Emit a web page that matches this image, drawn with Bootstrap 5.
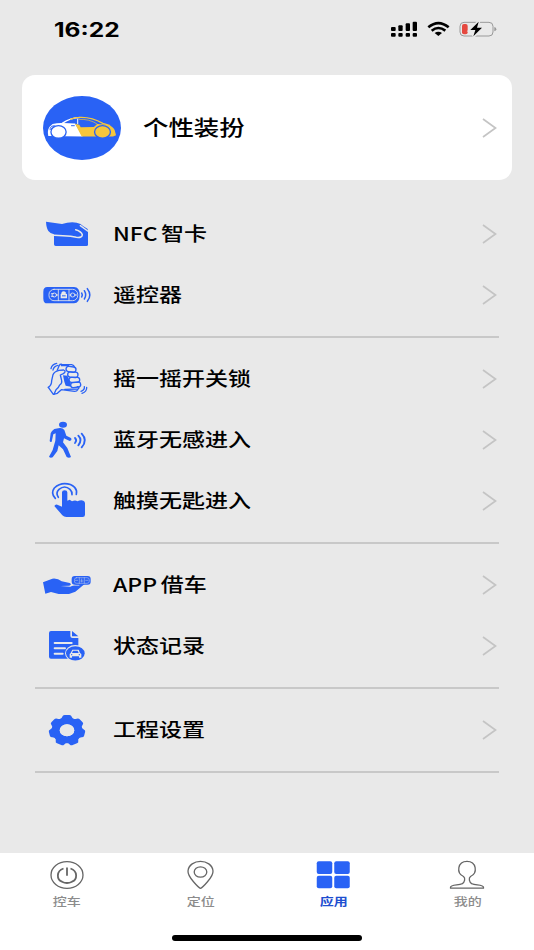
<!DOCTYPE html>
<html lang="zh-CN">
<head>
<meta charset="utf-8">
<meta name="viewport" content="width=device-width, initial-scale=1">
<title>应用</title>
<link href="https://cdn.jsdelivr.net/npm/bootstrap@5.3.0/dist/css/bootstrap.min.css" rel="stylesheet">
<style>
:root{--blue:#2962f5}
body{background:#e9e9e9;color:#000;font-family:"Noto Sans CJK SC",sans-serif;height:950px;overflow:hidden}
svg{display:block;flex:none;overflow:visible}
.status-bar{height:75px;padding:16px 36px 0 54px}
.clock{font:700 19.5px/27px Inter,sans-serif;transform:scaleX(1.26);transform-origin:left;padding-top:1px}
.dress-card{height:105px;margin:0 22px;border-radius:13px;padding:0 15px 0 21px}
.dress-card .wide{font-size:21px;margin-left:22px;padding-bottom:3px}
.wide{display:inline-block;transform:scaleX(1.21);transform-origin:left;font-weight:500;white-space:nowrap;line-height:30px}
.menu{margin:13px 35px 0 35px}
.menu-group{padding-top:10px;border-bottom:2px solid #c8c8c8}
.menu-row{height:61px;padding:0 2px 0 5px}
.menu-group.g-two{height:145px}
.menu-group.g-one{height:84px}
.menu-group.g-three{height:206px}
.menu-row .wide{font-size:19px;margin-left:17px;padding-bottom:1px}
.chev{margin-left:auto;fill:none;stroke:#c4c4c4;stroke-width:1.7}
.b{fill:var(--blue)}
.l{fill:none;stroke:var(--blue);stroke-width:5.5;stroke-linecap:round;stroke-linejoin:round}
.w{fill:none;stroke:#e9e9e9;stroke-linecap:round;stroke-linejoin:round}
.tabs{height:97px;padding-top:7px}
.tabs .wide{font-size:11.7px;line-height:18px;transform-origin:center;transform:scaleX(1.2);color:#8c8c8c;margin-top:2px}
.tabs .on .wide{color:#1f4fd0;font-weight:700}
.tab-line{fill:none;stroke:#666;stroke-width:1.3;stroke-linejoin:round}
.home-bar{width:190px;height:6px;border-radius:3px;background:#000;bottom:9px;left:172px}
</style>
<script src="https://cdn.jsdelivr.net/npm/bootstrap@5.3.0/dist/js/bootstrap.bundle.min.js"></script>
</head>
<body class="d-flex flex-column">
<svg width="0" height="0" class="position-absolute"><defs>
<path id="chev" d="M1 1 13.500 10 1 19"/>
</defs></svg>

<header class="status-bar d-flex align-items-start justify-content-between">
  <span class="clock">16:22</span>
  <svg width="108" height="26" viewBox="1143 48 324 78">
    <g><rect x="1146" y="81" width="14" height="12" rx="3"/><rect x="1168" y="76" width="13" height="17" rx="3"/><rect x="1190" y="70" width="13" height="23" rx="3"/><rect x="1211" y="65" width="13" height="28" rx="3"/>
    <rect x="1146" y="99" width="14" height="11" rx="3"/><rect x="1168" y="99" width="13" height="11" rx="3"/><rect x="1190" y="99" width="13" height="11" rx="3"/><rect x="1211" y="99" width="13" height="11" rx="3"/></g>
    <g fill="none" stroke="#000" stroke-width="8"><path d="M1258 82Q1288 57 1319 82"/><path d="M1268 92Q1288 76 1309 92"/></g>
    <path d="M1277 99Q1288 91 1299 99L1288 108Z"/>
    <rect x="1353" y="67" width="99" height="41" rx="12" fill="none" stroke="#999" stroke-width="3"/><path d="M1456 81Q1462 83 1462 87.500T1456 94Z" fill="#999"/>
    <rect x="1359" y="72" width="17" height="31" rx="6" fill="#e5483f"/>
    <path d="M1409 65 1384 90H1399L1393 109 1419 83H1404Z" stroke="#e9e9e9" stroke-width="9"/><path d="M1409 65 1384 90H1399L1393 109 1419 83H1404Z"/>
  </svg>
</header>

<section class="dress-card bg-white d-flex align-items-center">
  <svg width="78" height="64" viewBox="8 9 236 194" preserveAspectRatio="none">
    <ellipse class="b" cx="126" cy="106" rx="118" ry="97"/>
    <path d="M24 130Q20 114 28 102L37 94Q53 90 69 91L105 92 128 132Z" fill="#fff"/>
    <path d="M105 93 118 96 122 104 162 103 172 94 204 96Q222 102 225 113L229 128 220 132 125 132Z" fill="#f6c63c"/>
    <path d="M66 92Q91 75 121 74" fill="none" stroke="#fff" stroke-width="4"/>
    <path d="M90 80Q105 74 121 74 156 73 189 92L211 99" fill="none" stroke="#f6c63c" stroke-width="4"/>
    <path d="M113 78V94" stroke="#fff" stroke-width="3"/>
    <path d="M116 80Q148 78 172 94" fill="none" stroke="#f6c63c" stroke-width="2"/>
    <path d="M29 108 34 101 43 99Q39 108 28 111M93 99H104" fill="none" stroke="#2962f5" stroke-width="3"/>
    <ellipse cx="55" cy="118" rx="23" ry="19" fill="#fff" stroke="#2962f5" stroke-width="4"/>
    <ellipse cx="188" cy="118" rx="24" ry="19" fill="#f6c63c" stroke="#2962f5" stroke-width="4"/>
  </svg>
  <span class="wide">个性装扮</span>
  <svg class="chev" width="15" height="20"><use href="#chev"/></svg>
</section>

<main class="menu flex-grow-1">
  <div class="menu-group g-two">
    <div class="menu-row d-flex align-items-center">
      <svg width="56" height="48" viewBox="30 15 168 144">
        <path class="b" d="M48 50 96 57Q118 50 140 53 153 55 160 64L172 71Q174 73 174 78V119Q174 123 169 123H77Q72 123 72 118V88Q61 86 55 78 49 69 48 50Z"/>
        <path class="w" stroke-width="4.500" d="M73 91Q100 93 122 94L139 97Q157 99 157 89 154 79 137 74M151 62 173 78"/>
      </svg>
      <span class="wide">NFC<span style="margin-left:3px">智卡</span></span>
      <svg class="chev" width="15" height="20"><use href="#chev"/></svg>
    </div>
    <div class="menu-row d-flex align-items-center">
      <svg width="56" height="48" viewBox="30 198 168 144">
        <path class="b" d="M52 246H132Q149 246 149 270T132 295H52Q40 295 40 281V260Q40 246 52 246Z"/>
        <g class="w" stroke-width="2.500"><rect x="57" y="253" width="86" height="34" rx="15"/><path d="M85 254V287M117 254V287M64 266H71M64 274H71M78 270H83M119 270H124"/><ellipse cx="73" cy="270" rx="7" ry="6"/><ellipse cx="128" cy="270" rx="7" ry="6"/><path d="M135 270H140M95 267V263Q101 257 107 263V267"/></g>
        <path fill="#e9e9e9" d="M92 267H111V280H92ZM96 260H106V267H96Z"/><path class="b" d="M96 271H107V274H96Z"/>
        <g class="l" style="stroke-width:4.500"><path d="M155 264Q159 270 155 276M163 257Q171 270 163 282M172 251Q187 270 172 289"/></g>
      </svg>
      <span class="wide">遥控器</span>
      <svg class="chev" width="15" height="20"><use href="#chev"/></svg>
    </div>
  </div>
  <div class="menu-group g-three">
    <div class="menu-row d-flex align-items-center">
      <svg width="56" height="48" viewBox="30 15 168 144">
        <g class="l" style="stroke-width:4">
          <path d="M55 112Q65 105 65 92L69 74Q72 65 87 61L101 60Q110 64 100 71L91 75 95 92Q97 100 89 105 86 113 78 119L72 133"/>
          <path d="M55 112 70 133 82 130 94 119 134 124Q141 124 143 119"/>
          <path d="M82 60 88 46Q90 42 96 43L125 44Q132 45 134 52"/>
          <rect x="108" y="50" width="30" height="16" rx="8" transform="rotate(8 123 58)"/>
          <rect x="113" y="66" width="31" height="16" rx="8" transform="rotate(4 128 74)"/>
          <rect x="117" y="82" width="32" height="15" rx="7"/>
          <rect x="122" y="97" width="30" height="15" rx="7" transform="rotate(-7 137 104)"/>
          <path d="M104 118 144 117Q151 112 142 110"/>
          <path d="M63 56Q65 43 80 40M69 60Q71 49 84 46M153 124Q165 120 163 110M156 130Q171 125 170 112"/>
        </g>
        <path class="b" d="M99 76 112 77 121 96 123 110 107 107 103 95ZM93 44H119L116 49H93Z"/>
      </svg>
      <span class="wide">摇一摇开关锁</span>
      <svg class="chev" width="15" height="20"><use href="#chev"/></svg>
    </div>
    <div class="menu-row d-flex align-items-center">
      <svg width="56" height="48" viewBox="30 198 168 144">
        <ellipse class="b" cx="99" cy="224" rx="12" ry="9"/>
        <path class="b" d="M73 237 89 234Q98 233 103 240L109 257 123 264Q127 271 119 273L102 265 99 277 112 294 123 321Q117 326 110 321L99 298 86 286 82 303 68 322Q61 325 57 320L68 300 76 272 77 250 70 253 65 275Q61 278 59 273L62 250Q64 243 73 237Z"/>
        <g class="l"><path d="M135 264Q142 271 135 279M145 257Q158 270 145 286M155 251Q174 271 155 292"/></g>
      </svg>
      <span class="wide">蓝牙无感进入</span>
      <svg class="chev" width="15" height="20"><use href="#chev"/></svg>
    </div>
    <div class="menu-row d-flex align-items-center">
      <svg width="56" height="48" viewBox="30 51 168 144">
        <path class="b" d="M96 97Q96 91 104 91T112 97V122L119 119 126 124Q136 119 142 124 153 119 160 122 165 124 165 130V164Q165 171 158 171H109Q102 171 97 166L73 138Q76 132 82 134L96 140Z"/>
        <g class="l" style="stroke-width:5"><path d="M85 112Q76 99 87 88 104 74 120 88 127 95 126 104M76 115Q61 100 73 84 87 71 104 71 123 71 134 82 142 91 139 103"/></g>
      </svg>
      <span class="wide">触摸无匙进入</span>
      <svg class="chev" width="15" height="20"><use href="#chev"/></svg>
    </div>
  </div>
  <div class="menu-group g-two">
    <div class="menu-row d-flex align-items-center">
      <svg width="56" height="48" viewBox="30 3 168 144">
        <path class="b" d="M39 67 67 56Q83 54 95 64L119 69Q127 73 118 77L91 78 121 80 151 66Q176 57 171 66L136 95 117 102H86L63 96 46 101Z"/>
        <rect class="b" x="125" y="48" width="57" height="26" rx="9"/>
        <g class="w" stroke-width="1.600" opacity=".8"><rect x="133" y="53" width="45" height="17" rx="7"/><path d="M148 53V70M163 53V70M136 61H143M167 61H174M152 63H159M155 57V66"/></g>
        <path class="w" stroke-width="2" d="M126 76 147 76"/>
      </svg>
      <span class="wide">APP<span style="margin-left:3px">借车</span></span>
      <svg class="chev" width="15" height="20"><use href="#chev"/></svg>
    </div>
    <div class="menu-row d-flex align-items-center">
      <svg width="56" height="48" viewBox="30 186 168 144">
        <path class="b" d="M63 213H121V228Q121 234 128 234H145V296H63Q57 296 57 290V219Q57 213 63 213ZM126 213 145 229H126Z"/>
        <path class="w" stroke-width="6" d="M74 249H125M74 265H105M74 281H98"/>
        <ellipse cx="136" cy="280" rx="31" ry="25" fill="#e9e9e9"/><ellipse class="b" cx="136" cy="280" rx="28" ry="21.500"/>
        <path fill="#e9e9e9" d="M122 279 127 269H146L150 279 154 282V293H147V289H126V293H119V282Z"/><path class="b" d="M129 272H143L146 279H126Z"/><g class="b"><circle cx="125" cy="284" r="2"/><circle cx="148" cy="284" r="2"/></g>
      </svg>
      <span class="wide">状态记录</span>
      <svg class="chev" width="15" height="20"><use href="#chev"/></svg>
    </div>
  </div>
  <div class="menu-group g-one">
    <div class="menu-row d-flex align-items-center">
      <svg width="56" height="48" viewBox="30 108 168 144">
        <g transform="translate(111 181) scale(1.180 1)" class="b">
          <circle r="28" fill="none" stroke="#2962f5" stroke-width="20"/>
          <g id="tooth"><path d="M-19-33Q-13-36-12-41-11-46-6-46H6Q11-46 12-41 13-36 19-33Z"/></g>
          <use href="#tooth" transform="rotate(51.430)"/><use href="#tooth" transform="rotate(102.860)"/><use href="#tooth" transform="rotate(154.290)"/><use href="#tooth" transform="rotate(205.710)"/><use href="#tooth" transform="rotate(257.140)"/><use href="#tooth" transform="rotate(308.570)"/>
        </g>
        <ellipse cx="111" cy="181" rx="22" ry="18" fill="#e9e9e9"/>
      </svg>
      <span class="wide">工程设置</span>
      <svg class="chev" width="15" height="20"><use href="#chev"/></svg>
    </div>
  </div>
</main>

<nav class="tabs bg-white row g-0 text-center position-relative">
  <div class="col d-flex flex-column align-items-center">
    <svg width="36" height="30" viewBox="-18 -15 36 30"><g class="tab-line"><ellipse rx="16" ry="13.300"/><path stroke-width="1.800" d="M-3.500-6.500C-11-4-10.500 4.500-5 6.700-1.500 8.500 1.500 8.500 5 6.700 10.500 4.500 11-4 3.500-6.500M0-7.500V.8"/></g></svg>
    <span class="wide">控车</span>
  </div>
  <div class="col d-flex flex-column align-items-center">
    <svg width="36" height="30" viewBox="-18.500 -15 36 30"><g class="tab-line"><path d="M0 13.300C-1.500 13-13 2-12.500-4-12-10-6-13.700 0-13.700S12-10 12.500-4C13 2 1.500 13 0 13.300Z"/><ellipse cy="-3" rx="6.300" ry="5.200"/></g></svg>
    <span class="wide">定位</span>
  </div>
  <div class="col d-flex flex-column align-items-center on">
    <svg width="36" height="30" viewBox="-17.250 -15 36 30"><g class="b"><rect x="-16.500" y="-13.700" width="15.500" height="12.600" rx="2"/><rect x="1" y="-13.700" width="15.500" height="12.600" rx="2"/><rect x="-16.500" y=".8" width="15.500" height="12.400" rx="2"/><rect x="1" y=".8" width="15.500" height="12.400" rx="2"/></g></svg>
    <span class="wide">应用</span>
  </div>
  <div class="col d-flex flex-column align-items-center">
    <svg width="36" height="30" viewBox="-18 -15 36 30"><path class="tab-line" d="M-3.500 1.500C-11-2-9.500-13.700 0-13.700S11-2 3.500 1.500C1.500 3 2 7.500 5 8.800 8 10.500 16.500 9.500 16.500 12.500V13.200H-16.500V12.500C-16.500 9.500-8 10.500-5 8.800-2 7.500-1.500 3-3.500 1.500Z"/></svg>
    <span class="wide">我的</span>
  </div>
  <div class="home-bar position-absolute p-0"></div>
</nav>
</body>
</html>
